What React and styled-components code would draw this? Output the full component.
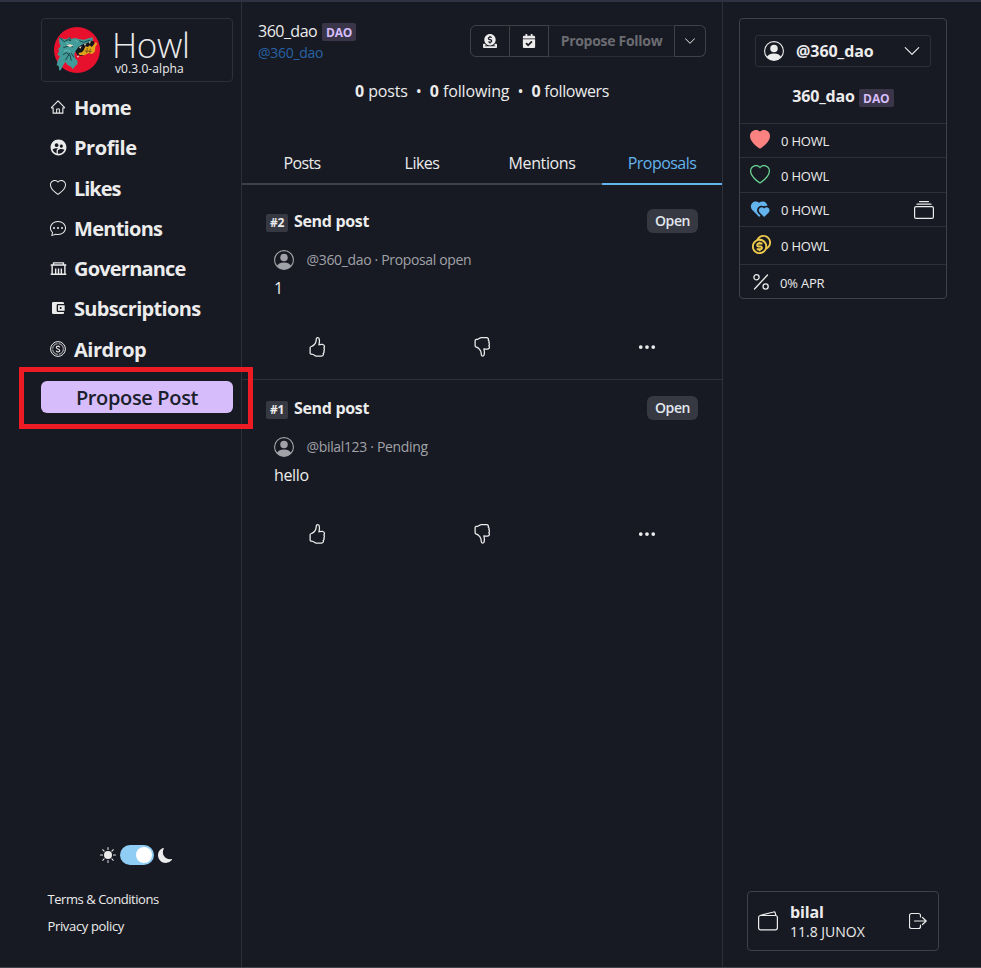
import React from "react";
import styled, { createGlobalStyle, css } from "styled-components";
import { AiOutlineHome } from "react-icons/ai";
import { MdSupervisedUserCircle, MdAccountBalanceWallet } from "react-icons/md";
import {
  BsHeart, BsHeartFill, BsChatDots, BsPersonCircle, BsThreeDots,
  BsMoonFill, BsBrightnessHighFill, BsHandThumbsUp, BsHandThumbsDown, BsChevronDown,
} from "react-icons/bs";
import { RiGovernmentLine, RiHeartsFill, RiCoinsLine } from "react-icons/ri";
import { FaDonate, FaCalendarCheck } from "react-icons/fa";

const line = "#2e3039";
const lineStrong = "#3f4149";

const GlobalStyle = createGlobalStyle`
  *, *::before, *::after { box-sizing: border-box; }
  body {
    margin: 0;
    background: #181a23;
    color: #ececec;
    font: 400 16px/24px "Open Sans", "Noto Sans", sans-serif;
  }
  svg { display: block; flex: none; }
`;

const Page = styled.div`
  height: 968px;
  display: grid;
  grid-template-columns: 242px 481px 1fr;
  border-top: 2px solid #2f3341;
  border-bottom: 1px solid #44444b;
  overflow: hidden;
`;

const Text = styled.span`
  font-size: ${(p) => p.$size || 16}px;
  font-weight: ${(p) => p.$weight || 400};
  letter-spacing: ${(p) => p.$track || 0}px;
  color: ${(p) => p.$color || "inherit"};
  white-space: pre;
`;

/* Left navigation */
const Sidebar = styled.nav`
  display: flex;
  flex-direction: column;
  border-right: 1px solid ${line};
  padding: 16px 8px 27px 41px;
`;

const Brand = styled.div`
  height: 64px;
  display: flex;
  align-items: center;
  gap: 13px;
  padding-left: 12px;
  border: 1px solid ${line};
  border-radius: 4px;
`;

const BrandText = styled.div`
  display: flex;
  flex-direction: column;
`;

const BrandName = styled.span`
  font-size: 35px;
  font-weight: 300;
  line-height: 36px;
  letter-spacing: -0.3px;
  margin: 3px 0 0 -1px;
`;

const Version = styled.span`
  font-size: 12px;
  line-height: 14px;
  letter-spacing: 0.08px;
  margin: -1px 0 1px 2px;
`;

const NavList = styled.div`
  margin-top: 6px;
  display: flex;
  flex-direction: column;
`;

const NavItem = styled.div`
  height: 40.25px;
  display: flex;
  align-items: center;
  gap: 8px;
  padding-left: 9px;
`;

const NavIcon = styled.span`
  width: 16px;
  height: 16px;
  margin-top: -2px;
  display: flex;
  align-items: center;
  justify-content: center;
`;

const ProposeWrap = styled.div`
  position: relative;
  margin-top: 11px;
`;

const ProposeButton = styled.button`
  display: block;
  width: 100%;
  height: 32px;
  padding: 1px 0 0;
  border: 0;
  border-radius: 6px;
  background: #d6bcfa;
  color: #1a202c;
  font: 600 20px/32px "Open Sans", sans-serif;
  letter-spacing: -0.35px;
`;

const Highlight = styled.div`
  position: absolute;
  inset: -14px -20px -16px -22px;
  border: 5px solid #ed1c24;
  pointer-events: none;
  z-index: 2;
`;

const Spacer = styled.div`flex: 1;`;

const ThemeRow = styled.div`
  display: flex;
  align-items: center;
  gap: 4px;
  margin: 0 0 21px 59px;
`;

const Switch = styled.span`
  width: 34px;
  height: 20px;
  padding: 2px;
  border-radius: 10px;
  background: #90cdf4;
  display: flex;
  justify-content: flex-end;
`;

const Knob = styled.span`
  width: 16px;
  height: 16px;
  border-radius: 50%;
  background: #fff;
`;

const FooterLink = styled.a`
  height: 27px;
  line-height: 27px;
  margin-left: 6.5px;
  font-size: 13px;
  letter-spacing: ${(p) => p.$track}px;
`;

/* Profile column */
const Main = styled.main`
  border-right: 1px solid ${line};
  display: flex;
  flex-direction: column;
`;

const ProfileHeader = styled.header`
  height: 63px;
  display: flex;
  justify-content: space-between;
  padding: 17px 16px 0;
`;

const Names = styled.div`
  display: flex;
  flex-direction: column;
`;

const NameLine = styled.div`
  display: flex;
  align-items: center;
  height: 24px;
  gap: ${(p) => p.$gap || 5}px;
`;

const Handle = styled.span`
  font-size: 14px;
  line-height: 20px;
  letter-spacing: -0.29px;
  color: #2762a5;
`;

const DaoBadge = styled.span`
  width: ${(p) => p.$w || 34}px;
  height: 18px;
  margin-top: ${(p) => p.$drop || 2}px;
  border-radius: 2px;
  background: #3a3549;
  color: #d6bcfa;
  font-size: 12px;
  font-weight: 700;
  line-height: 19px;
  letter-spacing: -0.1px;
  text-align: center;
`;

const ButtonGroup = styled.div`
  display: flex;
  width: 236px;
  height: 32px;
  margin-top: 6px;
`;

const GroupButton = styled.button`
  width: ${(p) => p.$w}px;
  height: 32px;
  padding: 0;
  display: flex;
  align-items: center;
  justify-content: center;
  background: none;
  color: #ececec;
  font: 700 14px/20px "Open Sans", sans-serif;
  letter-spacing: -0.29px;
  border: 1px solid ${lineStrong};
  border-left-width: ${(p) => (p.$first ? 1 : 0)}px;
  ${(p) => p.$first && css`border-radius: 6px 0 0 6px;`}
  ${(p) => p.$last && css`border-radius: 0 6px 6px 0;`}
  ${(p) => p.$muted && css`
    color: #6b6c71;
    border-top-color: #2a2c35;
    border-bottom-color: #2a2c35;
  `}
`;

const Stats = styled.div`
  height: 24px;
  margin-top: 14px;
  display: flex;
  justify-content: center;
`;

const Tabs = styled.div`
  display: grid;
  grid-template-columns: repeat(4, 1fr);
  margin-top: 40px;
`;

const Tab = styled.div`
  height: 42px;
  padding-top: 8px;
  text-align: center;
  letter-spacing: ${(p) => p.$track}px;
  color: ${(p) => (p.$active ? "#63b3ed" : "inherit")};
  border-bottom: 2px solid ${(p) => (p.$active ? "#63b3ed" : lineStrong)};
`;

const ProposalList = styled.div`padding-top: 8px;`;

const Proposal = styled.article`
  height: 187px;
  padding: 16px 24px 0;
  border-bottom: 1px solid ${(p) => (p.$last ? "transparent" : line)};
`;

const ProposalHead = styled.div`
  display: flex;
  align-items: center;
  height: 24px;
`;

const NumberBadge = styled.span`
  width: 22px;
  height: 18px;
  margin: 3px 6px 0 0;
  border-radius: 2px;
  background: #363842;
  font-size: 12px;
  font-weight: 700;
  line-height: 18px;
  letter-spacing: -0.3px;
  text-align: center;
`;

const StatusBadge = styled.span`
  width: 51px;
  height: 24px;
  margin-left: auto;
  border-radius: 6px;
  background: #363842;
  color: #e2e8f0;
  font-size: 14px;
  font-weight: 600;
  line-height: 24px;
  letter-spacing: -0.45px;
  text-align: center;
`;

const Author = styled.div`
  display: flex;
  align-items: center;
  gap: 12.5px;
  margin: 17px 0 0 8px;
  height: 20px;
  color: #a0a2a7;
`;

const Body = styled.p`
  margin: 6px 0 0 8px;
  letter-spacing: -0.34px;
`;

const Actions = styled.div`
  display: grid;
  grid-template-columns: 86px 244px 86px;
  margin: 37px 0 0 8px;
  height: 20px;
  align-items: center;
  justify-items: center;
`;

/* Account column */
const Aside = styled.aside`
  display: flex;
  flex-direction: column;
  padding: 16px 34px 16px 16px;
`;

const AccountCard = styled.section`
  width: 208px;
  border: 1px solid ${lineStrong};
  border-radius: 4px;
`;

const AccountTop = styled.div`
  height: 105px;
  padding: 16px 15px 0;
  border-bottom: 1px solid ${line};
`;

const Select = styled.div`
  height: 32px;
  padding: 0 9px 0 8px;
  display: flex;
  align-items: center;
  border: 1px solid ${line};
  border-radius: 3px;
`;

const SelectText = styled.span`
  flex: 1;
  margin-left: 12px;
  font-weight: 700;
  letter-spacing: -0.05px;
`;

const CenteredName = styled.div`
  margin-top: 17px;
  display: flex;
  justify-content: center;
`;

const BalanceRow = styled.div`
  height: ${(p) => p.$h}px;
  padding: 0 12px 0 10px;
  display: flex;
  align-items: center;
  border-bottom: ${(p) => (p.$last ? "0" : `1px solid ${line}`)};
`;

const BalanceIcon = styled.span`
  width: 20px;
  display: flex;
  justify-content: center;
  margin: ${(p) => p.$shift || "-3px 0 0 0"};
  color: ${(p) => p.$color || "inherit"};
`;

const BalanceText = styled.span`
  flex: 1;
  margin: ${(p) => p.$drop || 0}px 0 0 ${(p) => p.$gap || 11}px;
  font-size: 13px;
  letter-spacing: -0.2px;
`;

const UserCard = styled.section`
  width: 192px;
  height: 60px;
  margin-left: 8px;
  padding: 0 11px 0 10px;
  display: flex;
  align-items: center;
  border: 1px solid ${lineStrong};
  border-radius: 4px;
`;

const UserText = styled.div`
  flex: 1;
  margin: 1px 0 0 12px;
  display: flex;
  flex-direction: column;
  line-height: 19px;
`;

const WolfLogo = () => (
  <svg width="46" height="46" viewBox="72 81 138 138">
    <circle cx="141" cy="150" r="69" fill="#e8112d" />
    <path d="M87 111l14 6 9 1 9-7 4 6 12-3 14 4 14 1 13-4 12-3 1 9-7 9-12 5-16 5-13 9-8 12 2 13 8 9-1 10-7 6-6 9-6-8-10-5-7-9-6 9-7 14-5 3-2-14-6-2 3-14 7-14-8-3 5-11-2-8 7-7-4-9z" fill="#419b99" />
    <path d="M136 154l10-14 14-8 13-4 12-6 8 3-3 14-10 7-9 14-15 8-14-2z" fill="#14161c" />
    <path d="M145 159l11-2 6-8 4-10 8 2 5-5 6 5 8-8 4-7 5 5-6 9-1 14-8 8-12-2-12 6-14-1z" fill="#dfa51c" />
    <path d="M164 153l21 1M172 144l-2 15M181 146l-2 14" stroke="#4a3411" strokeWidth="1.800" fill="none" />
    <path d="M88 112l15 13 11-6 9 3M119 112l2 11M100 143l15-5 14 3M99 164l11-6 9 8M106 181l8-13 5-9M124 182l-4-17M132 172l-9-13M148 122l12 5 21-7" stroke="#123237" strokeWidth="2.500" fill="none" />
    <path d="M109 136l12-3 9 4-10 4zM147 141l4 5 4-7M162 132l3 6 4-8M177 126l2 6 4-8M140 168l5 5 2-6" fill="#efe2cb" />
    <path d="M102 153l11-3 7 4M107 128l9 3M136 121l8 5" stroke="#72bdb8" strokeWidth="2.500" fill="none" />
  </svg>
);

const CoinIcon = () => (
  <svg width="16" height="16" viewBox="0 0 16 16" fill="none" stroke="currentColor">
    <circle cx="8" cy="8" r="7.4" strokeWidth="1" />
    <circle cx="8" cy="8" r="5.3" strokeWidth=".8" strokeDasharray="7.2 1.1" />
    <path d="M9.700 6.300C9.500 5.500 8.800 5.100 8 5.100c-1 0-1.700.5-1.700 1.400C6.300 8.300 9.800 7.500 9.800 9.500c0 .9-.8 1.400-1.800 1.400s-1.700-.5-1.900-1.300" strokeWidth="1.100" />
  </svg>
);

const WalletIcon = () => (
  <svg width="20" height="20" viewBox="0 0 20 20" fill="none" stroke="currentColor" strokeWidth="1.200" strokeLinejoin="round">
    <rect x=".6" y="4.500" width="18.800" height="14.300" rx="2" />
    <path d="M2 4.500L15.700 1q1.200-.3 1.500.8L17.900 4.500" />
  </svg>
);

const AlbumsIcon = () => (
  <svg width="20" height="20" viewBox="0 0 20 20" fill="none" stroke="currentColor" strokeWidth="1.200" strokeLinecap="round">
    <rect x=".6" y="6.600" width="18.800" height="11.800" rx="1.500" />
    <path d="M3 4.200h14M5.500 1.600h9" />
  </svg>
);

const ExitIcon = () => (
  <svg width="18" height="18" viewBox="0 0 18 18" fill="none" stroke="currentColor" strokeWidth="1.200" strokeLinecap="round" strokeLinejoin="round">
    <path d="M11.500 5V3.500A2 2 0 0 0 9.500 1.500h-7a2 2 0 0 0-2 2v11a2 2 0 0 0 2 2h7a2 2 0 0 0 2-2V13" />
    <path d="M5.500 9h11.500M13.500 5.500L17.200 9l-3.700 3.500" />
  </svg>
);

const PercentIcon = () => (
  <svg width="16" height="16" viewBox="0 0 16 16" fill="none" stroke="currentColor" strokeWidth="1.300" strokeLinecap="round">
    <circle cx="3.500" cy="3.300" r="2.600" />
    <circle cx="12.600" cy="12.500" r="2.600" />
    <path d="M14.500 1L1.500 15" />
  </svg>
);

const navItems = [
  { label: "Home", icon: <AiOutlineHome size={16} />, track: -0.5 },
  { label: "Profile", icon: <MdSupervisedUserCircle size={19} />, track: -0.45 },
  { label: "Likes", icon: <BsHeart size={16} />, track: -1.05 },
  { label: "Mentions", icon: <BsChatDots size={16} />, track: -0.72 },
  { label: "Governance", icon: <RiGovernmentLine size={17} />, track: -0.8 },
  { label: "Subscriptions", icon: <MdAccountBalanceWallet size={16} />, track: -0.66 },
  { label: "Airdrop", icon: <CoinIcon />, track: -0.5 },
];

const tabs = [
  { label: "Posts", track: -0.6 },
  { label: "Likes", track: -0.5 },
  { label: "Mentions", track: -0.4 },
  { label: "Proposals", track: -0.55, active: true },
];

const proposals = [
  { id: "#2", meta: "@360_dao · Proposal open", body: "1" },
  { id: "#1", meta: "@bilal123 · Pending", body: "hello" },
];

const balances = [
  { h: 34, text: "0 HOWL", icon: <BsHeartFill size={20} />, color: "#fc8181", shift: "-1px 0 0" },
  { h: 35, text: "0 HOWL", icon: <BsHeart size={20} />, color: "#68d391", shift: "-1px 0 0", drop: 1 },
  { h: 34, text: "0 HOWL", icon: <RiHeartsFill size={20} />, color: "#63b3ed", shift: "-2px 0 0", extra: <AlbumsIcon /> },
  { h: 38, text: "0 HOWL", icon: <RiCoinsLine size={23} />, color: "#ecc94b", shift: "-2px -1px 0 1px" },
  { h: 33, text: "0% APR", icon: <PercentIcon />, shift: "0 -1px 0 1px", gap: 10, drop: 2, last: true },
];

export default function App() {
  return (
    <>
      <GlobalStyle />
      <Page>
        <Sidebar>
          <Brand>
            <WolfLogo />
            <BrandText>
              <BrandName>Howl</BrandName>
              <Version>v0.3.0-alpha</Version>
            </BrandText>
          </Brand>
          <NavList>
            {navItems.map((n) => (
              <NavItem key={n.label}>
                <NavIcon>{n.icon}</NavIcon>
                <Text $size={20} $weight={700} $track={n.track}>{n.label}</Text>
              </NavItem>
            ))}
          </NavList>
          <ProposeWrap>
            <ProposeButton>Propose Post</ProposeButton>
            <Highlight />
          </ProposeWrap>
          <Spacer />
          <ThemeRow>
            <BsBrightnessHighFill size={16} />
            <Switch><Knob /></Switch>
            <BsMoonFill size={15} />
          </ThemeRow>
          <FooterLink $track={-0.45}>Terms &amp; Conditions</FooterLink>
          <FooterLink $track={-0.35}>Privacy policy</FooterLink>
        </Sidebar>

        <Main>
          <ProfileHeader>
            <Names>
              <NameLine>
                <Text $track={-0.52}>360_dao</Text>
                <DaoBadge>DAO</DaoBadge>
              </NameLine>
              <Handle>@360_dao</Handle>
            </Names>
            <ButtonGroup>
              <GroupButton $w={40} $first><FaDonate size={14} /></GroupButton>
              <GroupButton $w={39}><FaCalendarCheck size={14} /></GroupButton>
              <GroupButton $w={126} $muted>Propose Follow</GroupButton>
              <GroupButton $w={31} $last><BsChevronDown size={12} /></GroupButton>
            </ButtonGroup>
          </ProfileHeader>
          <Stats>
            <Text $weight={700}>0</Text>
            <Text $track={-0.15}> posts  •  </Text>
            <Text $weight={700}>0</Text>
            <Text $track={-0.13}> following  •  </Text>
            <Text $weight={700}>0</Text>
            <Text $track={-0.4}> followers</Text>
          </Stats>
          <Tabs>
            {tabs.map((t) => (
              <Tab key={t.label} $active={t.active} $track={t.track}>{t.label}</Tab>
            ))}
          </Tabs>
          <ProposalList>
            {proposals.map((p, i) => (
              <Proposal key={p.id} $last={i === proposals.length - 1}>
                <ProposalHead>
                  <NumberBadge>{p.id}</NumberBadge>
                  <Text $weight={700} $track={-0.33}>Send post</Text>
                  <StatusBadge>Open</StatusBadge>
                </ProposalHead>
                <Author>
                  <BsPersonCircle size={20} />
                  <Text $size={14} $track={-0.34}>{p.meta}</Text>
                </Author>
                <Body>{p.body}</Body>
                <Actions>
                  <BsHandThumbsUp size={20} />
                  <BsHandThumbsDown size={20} />
                  <BsThreeDots size={20} />
                </Actions>
              </Proposal>
            ))}
          </ProposalList>
        </Main>

        <Aside>
          <AccountCard>
            <AccountTop>
              <Select>
                <BsPersonCircle size={20} />
                <SelectText>@360_dao</SelectText>
                <BsChevronDown size={18} />
              </Select>
              <CenteredName>
                <NameLine $gap={4}>
                  <Text $weight={700} $track={-0.15}>360_dao</Text>
                  <DaoBadge $w={35} $drop={3}>DAO</DaoBadge>
                </NameLine>
              </CenteredName>
            </AccountTop>
            {balances.map((b, i) => (
              <BalanceRow key={i} $h={b.h} $last={b.last}>
                <BalanceIcon $color={b.color} $shift={b.shift}>{b.icon}</BalanceIcon>
                <BalanceText $gap={b.gap} $drop={b.drop}>{b.text}</BalanceText>
                {b.extra}
              </BalanceRow>
            ))}
          </AccountCard>
          <Spacer />
          <UserCard>
            <WalletIcon />
            <UserText>
              <Text $weight={700} $track={-0.14}>bilal</Text>
              <Text $size={14}>11.8 JUNOX</Text>
            </UserText>
            <ExitIcon />
          </UserCard>
        </Aside>
      </Page>
    </>
  );
}
